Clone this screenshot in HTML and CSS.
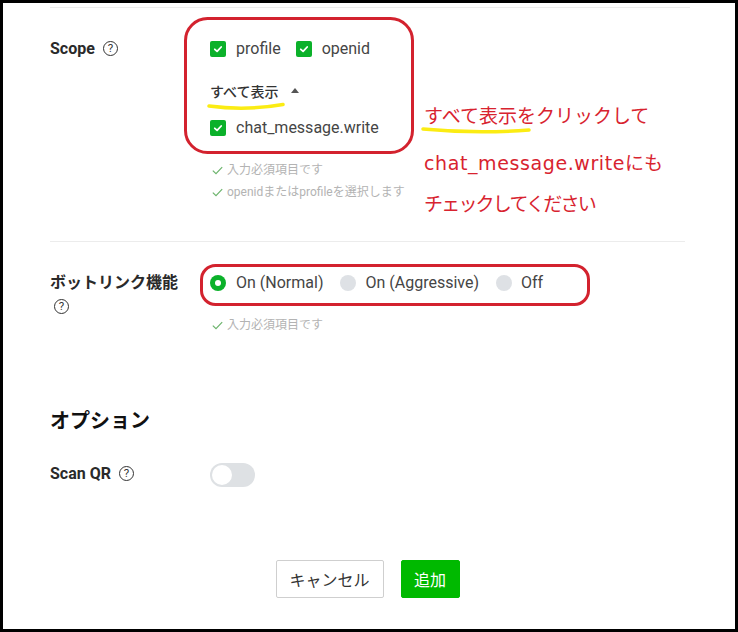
FILE: index.html
```html
<!DOCTYPE html>
<html lang="ja">
<head>
<meta charset="utf-8">
<title>Channel settings</title>
<link rel="stylesheet" href="styles.css">
</head>
<body>
<div class="frame">
  <div class="page">
    <div class="divider"></div>

    <section class="field field-scope">
      <div class="label">Scope <span class="help">?</span></div>
      <div class="control">
        <div class="checks">
          <label class="check"><span class="box"><svg viewBox="0 0 16 16" width="16" height="16"><path d="M4.8 8.3 L7.1 10.4 L11.2 6" fill="none" stroke="#fff" stroke-width="1.8" stroke-linecap="round" stroke-linejoin="round"/></svg></span>profile</label>
          <label class="check"><span class="box"><svg viewBox="0 0 16 16" width="16" height="16"><path d="M4.8 8.3 L7.1 10.4 L11.2 6" fill="none" stroke="#fff" stroke-width="1.8" stroke-linecap="round" stroke-linejoin="round"/></svg></span>openid</label>
        </div>
        <div class="show-all">すべて表示<span class="caret"></span></div>
        <div class="checks checks-more">
          <label class="check"><span class="box"><svg viewBox="0 0 16 16" width="16" height="16"><path d="M4.8 8.3 L7.1 10.4 L11.2 6" fill="none" stroke="#fff" stroke-width="1.8" stroke-linecap="round" stroke-linejoin="round"/></svg></span>chat_message.write</label>
        </div>
        <ul class="hints">
          <li><svg class="tick" viewBox="0 0 11 9" width="11" height="9"><path d="M0.8 4.6 L4 7.6 L10.2 1.2" fill="none" stroke="#6db46d" stroke-width="1.2"/></svg>入力必須項目です</li>
          <li><svg class="tick" viewBox="0 0 11 9" width="11" height="9"><path d="M0.8 4.6 L4 7.6 L10.2 1.2" fill="none" stroke="#6db46d" stroke-width="1.2"/></svg>openidまたはprofileを選択します</li>
        </ul>
      </div>
    </section>

    <div class="divider divider-2"></div>

    <section class="field field-bot">
      <div class="label">ボットリンク機能 <span class="help">?</span></div>
      <div class="control">
        <div class="radios">
          <label class="radio-item"><span class="radio on"></span>On (Normal)</label>
          <label class="radio-item"><span class="radio"></span>On (Aggressive)</label>
          <label class="radio-item"><span class="radio"></span>Off</label>
        </div>
        <ul class="hints">
          <li><svg class="tick" viewBox="0 0 11 9" width="11" height="9"><path d="M0.8 4.6 L4 7.6 L10.2 1.2" fill="none" stroke="#6db46d" stroke-width="1.2"/></svg>入力必須項目です</li>
        </ul>
      </div>
    </section>

    <h2 class="heading">オプション</h2>

    <section class="field field-scan">
      <div class="label">Scan QR <span class="help">?</span></div>
      <div class="control">
        <span class="toggle"><span class="knob"></span></span>
      </div>
    </section>
  </div>

  <div class="actions">
    <button class="btn btn-cancel">キャンセル</button>
    <button class="btn btn-add">追加</button>
  </div>

  <svg class="marks" viewBox="0 0 738 632" width="738" height="632">
    <rect x="185.5" y="18.5" width="227" height="134" rx="22" ry="22" fill="none" stroke="#d3222e" stroke-width="3"/>
    <rect x="201.5" y="265.5" width="387" height="39" rx="14" ry="14" fill="none" stroke="#d3222e" stroke-width="3"/>
    <path d="M209 106 Q 246 111 283 104.5" fill="none" stroke="#fbec13" stroke-width="3.5" stroke-linecap="round"/>
    <path d="M423 129 Q 476 134 529 130" fill="none" stroke="#fbec13" stroke-width="3.5" stroke-linecap="round"/>
  </svg>

  <div class="note">
    <div class="note-line">すべて表示をクリックして</div>
    <div class="note-line note-gap"><span class="note-latin">chat_message.write</span>にも</div>
    <div class="note-line note-tight">チェックしてください</div>
  </div>
</div>
</body>
</html>
```

FILE: styles.css
```css
* { box-sizing: border-box; }

html, body {
  margin: 0;
  padding: 0;
  background: #fff;
}

body {
  font-family: Roboto, "Noto Sans CJK JP", sans-serif;
  color: #333;
}

.frame {
  position: relative;
  width: 738px;
  height: 632px;
  border: 3px solid #000;
  background: #fff;
  overflow: hidden;
}

.page {
  padding-left: 47px;
}

.divider {
  width: 640px;
  margin-top: 4px;
  border-top: 1px solid #ececec;
}

.divider-2 {
  width: 635px;
  margin-top: 38px;
}

.field {
  display: grid;
  grid-template-columns: 160px 1fr;
  padding-top: 29px;
}

.label {
  font-size: 16px;
  font-weight: 700;
  line-height: 24px;
  color: #2a2a2a;
  padding-right: 24px;
}

.help {
  position: relative;
  top: -1px;
  display: inline-block;
  width: 15px;
  height: 15px;
  margin-left: 4px;
  border: 1.3px solid #333;
  border-radius: 50%;
  font-size: 11.5px;
  font-weight: 400;
  line-height: 12.6px;
  text-align: center;
  vertical-align: middle;
  color: #333;
}

.control {
  font-size: 16px;
  color: #454545;
}

.checks {
  display: flex;
  align-items: center;
  gap: 15px;
  height: 24px;
}

.checks-more {
  margin-top: 13px;
}

.check {
  display: flex;
  align-items: center;
  gap: 10px;
  line-height: 24px;
}

.box {
  display: block;
  width: 16px;
  height: 16px;
  border-radius: 2px;
  background: #0bb12a;
}

.box svg {
  display: block;
}

.show-all {
  margin-top: 18px;
  display: flex;
  align-items: center;
  height: 24px;
  font-size: 14px;
  font-weight: 500;
  color: #333;
}

.caret {
  display: block;
  width: 0;
  height: 0;
  margin-left: 13px;
  margin-top: -2px;
  border-left: 4.5px solid transparent;
  border-right: 4.5px solid transparent;
  border-bottom: 5px solid #555;
}

.hints {
  list-style: none;
  margin: 19px 0 0;
  padding: 0 0 0 2px;
  font-size: 12px;
  line-height: 22px;
  color: #b3b3b3;
}

.hints li {
  display: flex;
  align-items: center;
}

.tick {
  display: block;
  margin-right: 4px;
}

.radios {
  display: flex;
  align-items: center;
  gap: 17px;
  height: 24px;
}

.radio-item {
  display: flex;
  align-items: center;
  gap: 9px;
  line-height: 24px;
}

.radio-item:first-child {
  gap: 10px;
}

.radio {
  position: relative;
  display: block;
  width: 16px;
  height: 16px;
  border-radius: 50%;
  background: #dee1e5;
}

.radio.on {
  background: #0bb12a;
}

.radio.on::after {
  content: "";
  position: absolute;
  left: 5px;
  top: 5px;
  width: 6px;
  height: 6px;
  border-radius: 50%;
  background: #fff;
}

.heading {
  margin: 70px 0 0;
  font-size: 20px;
  font-weight: 700;
  line-height: 28px;
  color: #111;
  font-family: "Noto Sans CJK JP", sans-serif;
}

.field-scan {
  padding-top: 28px;
}

.toggle {
  display: block;
  position: relative;
  width: 45px;
  height: 24px;
  margin-top: 1px;
  border-radius: 12px;
  background: #dee1e4;
}

.knob {
  position: absolute;
  left: 2px;
  top: 2px;
  width: 20px;
  height: 20px;
  border-radius: 50%;
  background: #fff;
}

.actions {
  display: flex;
  justify-content: center;
  gap: 17px;
  margin-top: 73px;
  padding-right: 3px;
}

.btn {
  height: 38px;
  border-radius: 2px;
  font-family: "Noto Sans CJK JP", sans-serif;
  font-size: 16px;
  line-height: 36px;
  padding: 0;
  cursor: pointer;
}

.btn-cancel {
  width: 108px;
  background: #fff;
  border: 1px solid #cfcfcf;
  color: #333;
}

.btn-add {
  width: 59px;
  background: #00b900;
  border: 1px solid #00b900;
  color: #fff;
}

.marks {
  position: absolute;
  left: -3px;
  top: -3px;
  pointer-events: none;
}

.note {
  position: absolute;
  left: 421px;
  top: 92px;
  font-family: "Noto Sans CJK JP", sans-serif;
  font-size: 19px;
  line-height: 40px;
  color: #d8232f;
  white-space: nowrap;
}

.note-gap {
  margin-top: 7px;
}

.note-latin {
  font-family: "DejaVu Sans", "Noto Sans CJK JP", sans-serif;
  font-size: 19px;
  letter-spacing: 0.6px;
}

.note-tight {
  letter-spacing: -1.8px;
}
```
